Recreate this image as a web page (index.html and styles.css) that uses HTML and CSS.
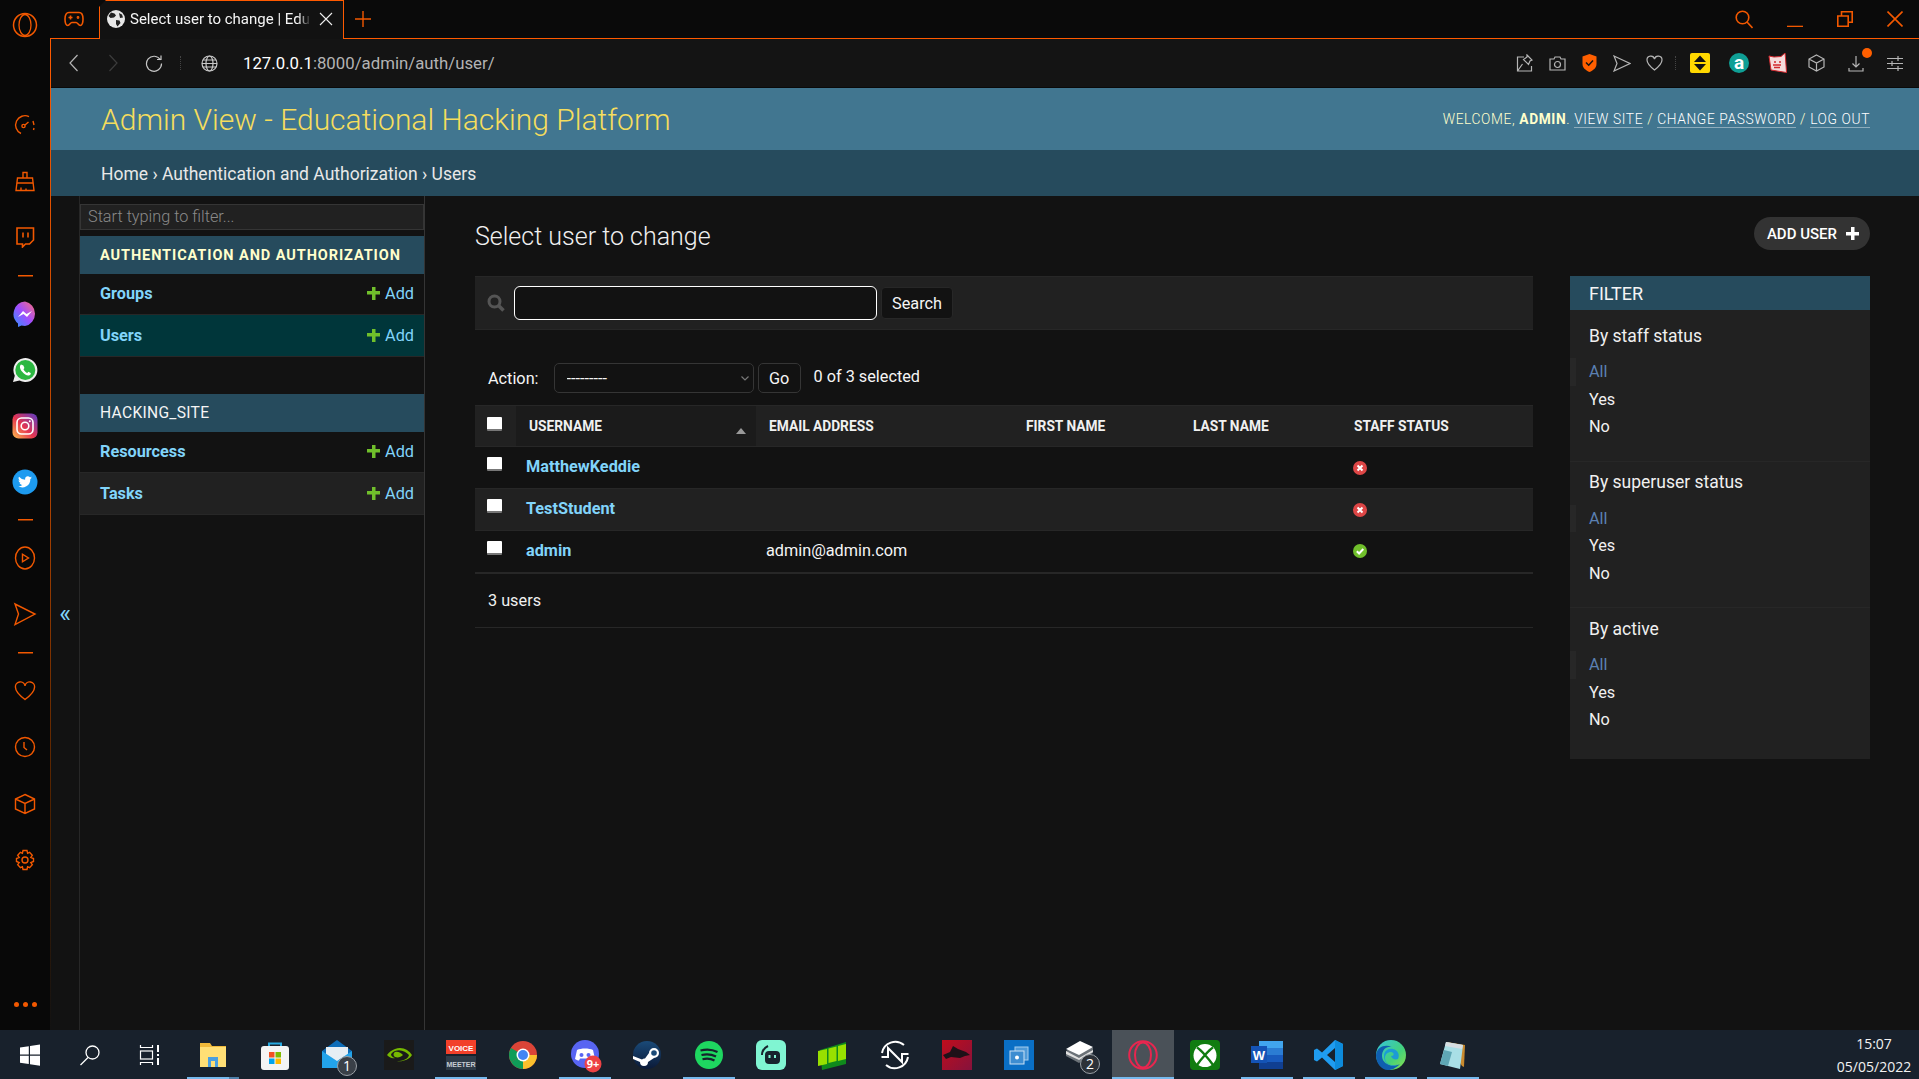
FILE: index.html
```html
<!DOCTYPE html>
<html lang="en">

<head>
    <meta charset="UTF-8">
    <title>Select user to change | Educational Hacking Platform</title>
    <link rel="stylesheet" href="styles.css">
</head>

<body>
    <div class="screen">
        <!-- opera side rail -->
        <aside class="rail">
            <div class="rail-logo"><svg class="ic" width="26" height="26" viewBox="0 0 26 26"><circle cx="13" cy="13" r="11.5" stroke-width="1.5"/><ellipse cx="13" cy="13" rx="6" ry="10.5" stroke-width="1.3"/></svg></div>
            <div class="rail-slot rail-first"><svg class="ic" width="22" height="22" viewBox="0 0 22 22"><path d="M7 19.500A9.300 9.300 0 1 1 15 2.600"/><path d="M19 7l1 4M20 14l-.5 2"/><circle cx="9.500" cy="12" r="1.600"/><path d="M11 11l3.500-3"/></svg></div>
            <div class="rail-slot"><svg class="ic" width="22" height="22" viewBox="0 0 22 22"><path d="M9 8V2.500h4V8M3.500 8h15l1.500 12.500H2z"/><path d="M3 13h16M7 20.500v-3M12 20.500v-2"/></svg></div>
            <div class="rail-slot"><svg class="ic ic-thick" width="22" height="22" viewBox="0 0 22 22"><path d="M3 2h16.500v12l-4 4h-4l-3 3v-3H3z"/><path d="M9 6.500v5M14 6.500v5"/></svg></div>
            <div class="rail-dash"></div>
            <div class="rail-slot"><svg width="26" height="26" viewBox="0 0 26 26"><defs><linearGradient id="msg" x1="0" y1="1" x2="1" y2="0"><stop offset="0" stop-color="#2b93ff"/><stop offset=".5" stop-color="#a04dff"/><stop offset="1" stop-color="#ff7078"/></linearGradient></defs><path d="M13 .500a12.500 12.500 0 0 1 0 24.500c-1.300 0-2.500-.2-3.500-.5L6 26v-3.500A12.500 12.500 0 0 1 13 .500z" fill="url(#msg)"/><path d="M6 16l5-6 3.500 3 5.500-3-5 6-3.500-3z" fill="#fff"/></svg></div>
            <div class="rail-slot"><svg width="26" height="26" viewBox="0 0 26 26"><path d="M1 25l1.800-6.300A12 12 0 1 1 7.500 23.500z" fill="#eee"/><circle cx="13.300" cy="13" r="10" fill="#2bb741"/><path d="M9 7.500c-1.500 1.500-1.500 4 1 7s5 4.500 7 4c1.500-.4 2-2 1.700-2.600l-2.400-1.200-1 1.200c-1.500-.5-3-2-3.800-3.700l.9-1.200-1-2.500z" fill="#fff"/></svg></div>
            <div class="rail-slot"><svg width="26" height="26" viewBox="0 0 26 26"><defs><linearGradient id="ig" x1="0" y1="1" x2="1" y2="0"><stop offset="0" stop-color="#fdc04f"/><stop offset=".45" stop-color="#e7354f"/><stop offset="1" stop-color="#5a3dc8"/></linearGradient></defs><rect x="0.500" y="0.500" width="25" height="25" rx="6" fill="url(#ig)"/><rect x="5" y="5" width="16" height="16" rx="4.500" fill="none" stroke="#fff" stroke-width="1.600"/><circle cx="13" cy="13" r="3.800" fill="none" stroke="#fff" stroke-width="1.600"/><circle cx="17.800" cy="8.200" r="1" fill="#fff"/></svg></div>
            <div class="rail-slot"><svg width="26" height="26" viewBox="0 0 26 26"><circle cx="13" cy="13" r="12.500" fill="#1d9bf0"/><path d="M20 8.500c-.5.300-1 .4-1.600.5.600-.3 1-.9 1.200-1.500-.5.300-1.100.5-1.700.7a2.800 2.800 0 0 0-4.800 2.500A8 8 0 0 1 7 7.800a2.800 2.800 0 0 0 .9 3.700c-.5 0-.9-.1-1.300-.3 0 1.400 1 2.500 2.300 2.800-.4.100-.9.100-1.300 0 .4 1.100 1.400 1.900 2.700 1.900A5.700 5.700 0 0 1 6 17.100a8 8 0 0 0 12.300-7.200c.7-.3 1.200-.8 1.700-1.400z" fill="#fff"/></svg></div>
            <div class="rail-dash"></div>
            <div class="rail-slot"><svg class="ic" width="22" height="24" viewBox="0 0 22 24"><ellipse cx="11" cy="12" rx="9.500" ry="11"/><path d="M8.500 8.200v7.600l6-3.800z"/></svg></div>
            <div class="rail-slot"><svg class="ic" width="24" height="24" viewBox="0 0 24 24"><path d="M2 2l20 10L2 22.500l3.500-10.500z"/></svg></div>
            <div class="rail-dash"></div>
            <div class="rail-slot"><svg class="ic" width="22" height="20" viewBox="0 0 22 20"><path d="M11 18.500C5 14 1.500 10.500 1.500 6.500a4.800 4.800 0 0 1 9.500-1.500 4.800 4.800 0 0 1 9.500 1.500c0 4-3.500 7.500-9.500 12z"/></svg></div>
            <div class="rail-slot"><svg class="ic" width="22" height="22" viewBox="0 0 22 22"><circle cx="11" cy="11" r="9.500"/><path d="M10 6v5.500l3 2.500"/></svg></div>
            <div class="rail-slot rail-cube"><svg class="ic" width="22" height="22" viewBox="0 0 22 22"><path d="M11 1.500l9.500 4.500v10L11 20.500 1.500 16V6zM1.500 6L11 10.500 20.500 6M11 10.500v10"/></svg></div>
            <div class="rail-slot"><svg class="ic" width="22" height="22" viewBox="0 0 22 22"><circle cx="11" cy="11" r="3"/><path d="M9 1.500h4l.6 2.800 2-.9 2.700 3-1.500 2 2.700 1.100v3l-2.700 1.100 1.500 2-2.700 3-2-.9-.6 2.800H9l-.6-2.800-2 .9-2.700-3 1.500-2L2.500 12.500v-3l2.700-1.100-1.500-2 2.700-3 2 .9z"/></svg></div>
            <div class="rail-dots"><i></i><i></i><i></i></div>
        </aside>

        <div class="browser">
            <!-- tabs -->
            <div class="tabstrip">
                <div class="strip-game"><svg class="ic ic-thick" width="20" height="16" viewBox="0 0 20 16"><path d="M5 1.500h10c2.500 0 4 2.500 4 6.500 0 4-1 6.500-2.800 6.500-1.700 0-2.700-3-4-3H7.800c-1.300 0-2.300 3-4 3C2 14.500 1 12 1 8c0-4 1.500-6.500 4-6.500z"/><path d="M4.500 6.500h4M6.500 4.500v4"/><circle cx="14" cy="6.500" r=".6"/></svg></div>
                <div class="tab">
                    <svg width="18" height="18" viewBox="0 0 18 18"><circle cx="9" cy="9" r="9" fill="#e8e8e8"/><path d="M4 2.500l3.500 1 1.500 2-2 2-3.500.5-2-2zM9 10l3.500.5 1 2.500-3 3.500-1.500-2.500zM12 3l3 1.500 1 3-3 .5z" fill="#222"/></svg>
                    <span class="tab-title">Select user to change | Edu</span>
                    <svg class="tab-close" width="14" height="14" viewBox="0 0 14 14"><path d="M1 1l12 12M13 1L1 13" stroke="#eee" stroke-width="1.100"/></svg>
                </div>
                <div class="tab-new"><svg class="ic" width="16" height="16" viewBox="0 0 16 16"><path d="M8 0v16M0 8h16"/></svg></div>
                <div class="strip-right">
                    <svg class="ic ic-thick" width="18" height="19" viewBox="0 0 18 19"><circle cx="7.500" cy="7.500" r="6.300"/><path d="M12 12l5.500 6"/></svg>
                    <svg class="ic ic-thick win-btn" width="16" height="16" viewBox="0 0 16 16"><path d="M0 15.500h16"/></svg>
                    <svg class="ic ic-thick win-btn" width="16" height="16" viewBox="0 0 16 16"><path d="M.8 5h10.400v10.400H.8zM4.500 5V.8h10.700v10.500h-4"/></svg>
                    <svg class="ic ic-thick win-btn" width="16" height="16" viewBox="0 0 16 16"><path d="M.5.500l15 15M15.500.500l-15 15"/></svg>
                </div>
            </div>

            <!-- address bar -->
            <div class="toolbar">
                <svg class="tool tool-back" width="11" height="18" viewBox="0 0 11 18"><path d="M9.500 1L2 9l7.500 8"/></svg>
                <svg class="tool tool-fwd" width="11" height="18" viewBox="0 0 11 18"><path d="M1.500 1L9 9l-7.500 8"/></svg>
                <svg class="tool tool-reload" width="18" height="18" viewBox="0 0 18 18"><path d="M15.500 6A7.500 7.500 0 1 0 16.500 9.500M12 5.500h4V1.500"/></svg>
                <span class="dots-v"></span>
                <svg class="tool tool-globe" width="17" height="17" viewBox="0 0 17 17"><circle cx="8.500" cy="8.500" r="7.500"/><ellipse cx="8.500" cy="8.500" rx="3.500" ry="7.500"/><path d="M1 8.500h15M2 5h13M2 12h13"/></svg>
                <div class="url"><b>127.0.0.1</b>:8000/admin/auth/user/</div>
                <div class="tools-right">
                    <span class="slot"><svg class="tool" width="17" height="18" viewBox="0 0 17 18"><path d="M8 3H1.500v14h14v-5M1.500 17l5-7"/><path d="M11 1l5 5-2 1-1.500 3.500-5-5L11 3z"/></svg></span>
                    <span class="slot"><svg class="tool" width="17" height="15" viewBox="0 0 17 15"><path d="M1 3h4l1-2h5l1 2h4v11H1z"/><circle cx="8.500" cy="8.500" r="3"/></svg></span>
                    <span class="slot"><svg width="15" height="18" viewBox="0 0 15 18"><path d="M7.500 0l7 2.500V10c0 4-3.500 6.500-7 8-3.500-1.500-7-4-7-8V2.500z" fill="#ff5f00"/><path d="M4 8.500l2.700 2.700L11 6.500" fill="none" stroke="#141414" stroke-width="1.500"/></svg></span>
                    <span class="slot"><svg class="tool" width="18" height="17" viewBox="0 0 18 17"><path d="M1 1l16 7.500L1 16l3-7.500z"/></svg></span>
                    <span class="slot"><svg class="tool" width="17" height="16" viewBox="0 0 17 16"><path d="M8.500 15C4 11.500 1 8.500 1 5a3.800 3.800 0 0 1 7.500-1A3.800 3.800 0 0 1 16 5c0 3.500-3 6.500-7.500 10z"/></svg></span>
                    <span class="dots-v dots-right"></span>
                    <span class="ext"><svg width="20" height="20" viewBox="0 0 20 20"><rect width="20" height="20" rx="2" fill="#ffd800"/><path d="M10 2.500l6 6.500H4zM10 17.500L4 11h12z" fill="#111"/></svg></span>
                    <span class="ext"><svg class="ext-round" width="20" height="20" viewBox="0 0 20 20"><circle cx="10" cy="10" r="10" fill="#0f9f95"/><text x="10" y="15.500" class="ext-a">a</text></svg></span>
                    <span class="ext"><svg width="20" height="20" viewBox="0 0 20 20"><path d="M1 3l5 1 7-.5L17 0l.5 5 1 14.500L3 17z" fill="#f5dcdc" stroke="#d2282e"/><path d="M6 9h2M11 9h2M5 12h8M6 14.500h6" stroke="#d2282e" stroke-width="1.500"/></svg></span>
                    <span class="ext"><svg class="tool" width="17" height="18" viewBox="0 0 17 18"><path d="M8.500 1L16 5v8l-7.500 4L1 13V5zM1 5l7.500 4L16 5M8.500 9v8"/></svg></span>
                    <span class="ext ext-dl"><svg class="tool" width="16" height="17" viewBox="0 0 16 17"><path d="M8 1v11M4.500 8.500L8 12l3.500-3.500M1 13v3h14v-3"/></svg><i class="dl-badge"></i></span>
                    <span class="ext"><svg class="tool" width="16" height="15" viewBox="0 0 16 15"><path d="M0 2.500h16M0 7.500h16M0 12.500h16M11 0v5M5 5v5M11 10v5"/></svg></span>
                </div>
            </div>

            <!-- django admin page -->
            <div class="site">
                <header class="site-header">
                    <div class="branding">Admin View - Educational Hacking Platform</div>
                    <div class="user-tools">WELCOME, <strong>ADMIN</strong>. <a>VIEW SITE</a> / <a>CHANGE PASSWORD</a> / <a>LOG OUT</a></div>
                </header>
                <div class="breadcrumbs">Home › Authentication and Authorization › Users</div>

                <div class="content">
                    <div class="nav-toggle">«</div>
                    <nav class="sidebar">
                        <input class="nav-filter" placeholder="Start typing to filter...">
                        <div class="app-caption app-current">AUTHENTICATION AND AUTHORIZATION</div>
                        <div class="app-row"><a>Groups</a><span class="add"><i class="plus"></i>Add</span></div>
                        <div class="app-row app-row-current"><a>Users</a><span class="add"><i class="plus"></i>Add</span></div>
                        <div class="app-caption app-second">HACKING_SITE</div>
                        <div class="app-row"><a>Resourcess</a><span class="add"><i class="plus"></i>Add</span></div>
                        <div class="app-row app-row-alt"><a>Tasks</a><span class="add"><i class="plus"></i>Add</span></div>
                    </nav>

                    <main class="main">
                        <div class="title-row">
                            <h1>Select user to change</h1>
                            <a class="add-user">ADD USER<i class="plus plus-white"></i></a>
                        </div>
                        <div class="columns">
                            <section class="changelist">
                                <div class="search-bar">
                                    <svg width="18" height="18" viewBox="0 0 18 18"><circle cx="7.500" cy="7.500" r="5.500" fill="none" stroke="#555" stroke-width="3"/><path d="M11.500 11.500l5 5" stroke="#555" stroke-width="3.500"/></svg>
                                    <input class="search-input" type="text">
                                    <button class="btn btn-search">Search</button>
                                </div>
                                <div class="actions">
                                    <span>Action:</span>
                                    <div class="select-wrap">
                                        <select class="action-select"><option>---------</option></select>
                                        <svg class="select-arrow" width="8" height="5" viewBox="0 0 8 5"><path d="M.5.500L4 4 7.500.500" fill="none" stroke="#777" stroke-width="1.200"/></svg>
                                    </div>
                                    <button class="btn btn-go">Go</button>
                                    <span class="counter">0 of 3 selected</span>
                                </div>
                                <table class="results">
                                    <thead>
                                        <tr>
                                            <th class="col-check"><input type="checkbox" class="check check-head"></th>
                                            <th class="col-user">USERNAME<i class="sort-up"></i></th>
                                            <th class="col-email">EMAIL ADDRESS</th>
                                            <th class="col-first">FIRST NAME</th>
                                            <th class="col-last">LAST NAME</th>
                                            <th>STAFF STATUS</th>
                                        </tr>
                                    </thead>
                                    <tbody>
                                        <tr>
                                            <td class="col-check"><input type="checkbox" class="check"></td>
                                            <td class="cell-user"><a>MatthewKeddie</a></td>
                                            <td></td><td></td><td></td>
                                            <td class="cell-status"><svg width="14" height="14" viewBox="0 0 14 14"><circle cx="7" cy="7" r="7" fill="#dd4646"/><path d="M4.500 4.500l5 5M9.500 4.500l-5 5" stroke="#fff" stroke-width="2"/></svg></td>
                                        </tr>
                                        <tr class="row-alt">
                                            <td class="col-check"><input type="checkbox" class="check"></td>
                                            <td class="cell-user"><a>TestStudent</a></td>
                                            <td></td><td></td><td></td>
                                            <td class="cell-status"><svg width="14" height="14" viewBox="0 0 14 14"><circle cx="7" cy="7" r="7" fill="#dd4646"/><path d="M4.500 4.500l5 5M9.500 4.500l-5 5" stroke="#fff" stroke-width="2"/></svg></td>
                                        </tr>
                                        <tr class="row-last">
                                            <td class="col-check"><input type="checkbox" class="check"></td>
                                            <td class="cell-user"><a>admin</a></td>
                                            <td class="cell-email">admin@admin.com</td><td></td><td></td>
                                            <td class="cell-status"><svg width="14" height="14" viewBox="0 0 14 14"><circle cx="7" cy="7" r="7" fill="#70bf2b"/><path d="M3.800 7.200l2.300 2.300 4.200-4.500" fill="none" stroke="#fff" stroke-width="2"/></svg></td>
                                        </tr>
                                    </tbody>
                                </table>
                                <p class="paginator">3 users</p>
                            </section>

                            <aside class="filter">
                                <h2>FILTER</h2>
                                <div class="filter-group">
                                    <h3>By staff status</h3>
                                    <ul><li class="selected">All</li><li>Yes</li><li>No</li></ul>
                                </div>
                                <div class="filter-group">
                                    <h3>By superuser status</h3>
                                    <ul><li class="selected">All</li><li>Yes</li><li>No</li></ul>
                                </div>
                                <div class="filter-group">
                                    <h3>By active</h3>
                                    <ul><li class="selected">All</li><li>Yes</li><li>No</li></ul>
                                </div>
                            </aside>
                        </div>
                    </main>
                </div>
            </div>
        </div>
    </div>

    <!-- windows taskbar -->
    <footer class="taskbar">
        <span class="task task-sys"><svg width="22" height="22" viewBox="0 0 22 22"><path d="M1 3.500l8.800-1.300v8.300H1zM11 2L21 .5v10H11zM1 11.800h8.800v8.300L1 18.800zM11 11.800h10v10L11 20.300z" fill="#fff"/></svg></span>
        <span class="task task-sys"><svg width="22" height="22" viewBox="0 0 22 22"><circle cx="13.500" cy="8.500" r="6.500" fill="none" stroke="#fff" stroke-width="1.300"/><path d="M9 13.500L1.500 21" stroke="#fff" stroke-width="1.300"/></svg></span>
        <span class="task task-sys"><svg width="22" height="22" viewBox="0 0 22 22" fill="none" stroke="#fff" stroke-width="1.200"><path d="M1.500 1v2.500h12V1M1.500 21v-2.500h12V21"/><rect x="1.500" y="7" width="12" height="8"/><path d="M19 1v7M19 14v7" stroke-width="2"/><path d="M19 10v2" stroke-width="2"/></svg></span>
        <span class="task task-files is-open is-split"><svg width="28" height="26" viewBox="0 0 28 26"><path d="M1 1h10l2 3h14v21H1z" fill="#f0b93a"/><path d="M1 5h26v20H1z" fill="#ffdf75"/><path d="M9 25V15h10v10h-3v-6h-4v6z" fill="#4a9fe0"/></svg></span>
        <span class="task"><svg width="30" height="30" viewBox="0 0 30 30"><path d="M9 8V3.500h12V8" fill="none" stroke="#26a9e0" stroke-width="2"/><rect x="1" y="6" width="28" height="24" rx="3" fill="#f4f4f4"/><rect x="9" y="12" width="5.500" height="5.500" fill="#f25022"/><rect x="15.500" y="12" width="5.500" height="5.500" fill="#7fba00"/><rect x="9" y="18.500" width="5.500" height="5.500" fill="#00a4ef"/><rect x="15.500" y="18.500" width="5.500" height="5.500" fill="#ffb900"/></svg></span>
        <span class="task"><svg width="32" height="32" viewBox="0 0 32 32"><path d="M1 12L16 1l15 11v16H1z" fill="#0e6db8"/><path d="M5 8h22v12l-11 6-11-6z" fill="#e6eef4"/><path d="M1 12l15 10 15-10v17H1z" fill="#22a3ea"/><circle cx="26" cy="27" r="9.500" fill="#3a4048" stroke="#9aa0a6"/><text x="26" y="32" class="badge-num">1</text></svg></span>
        <span class="task"><svg width="30" height="30" viewBox="0 0 30 30"><rect width="30" height="30" fill="#1a1a1a"/><path d="M11 9c7-3 14 1 17 6-3 5-10 7-15 6 6 0 11-2 12-6-3-3-8-6-14-4zM3 15c2-3 5-5 8-6v2c-2 1-4 2-4 4 1 2 3 3 4 3-3 1-6-1-8-3z" fill="#76b900"/><path d="M11 12c3-1 6 1 8 3-2 2-5 3-8 2-2-1-2-4 0-5z" fill="#76b900"/></svg></span>
        <span class="task is-open"><svg width="30" height="30" viewBox="0 0 30 30"><rect width="30" height="14" fill="#f2402a"/><rect y="16" width="30" height="14" fill="#2e3b48"/><text x="15" y="11" class="vm-text">VOICE</text><text x="15" y="26.500" class="vm-text vm-low">MEETER</text></svg></span>
        <span class="task"><svg width="28" height="28" viewBox="0 0 28 28"><circle cx="14" cy="14" r="14" fill="#db4437"/><path d="M14 14L2 21A14 14 0 0 0 14 28L21 14z" fill="#0f9d58"/><path d="M14 14h14a14 14 0 0 1-14 14z" fill="#fbc02d"/><path d="M14 14L2 7A14 14 0 0 0 2 21z" fill="#0f9d58"/><circle cx="14" cy="14" r="6.500" fill="#fff"/><circle cx="14" cy="14" r="5" fill="#4285f4"/></svg></span>
        <span class="task is-open"><svg width="32" height="32" viewBox="0 0 32 32"><circle cx="16" cy="15" r="14" fill="#5865f2"/><path d="M8 11c4-2 12-2 16 0l2 9c-2 1-3 1.500-4 1.500l-1-2H11l-1 2c-1 0-2-.5-4-1.500z" fill="#fff"/><circle cx="12.500" cy="16" r="2" fill="#5865f2"/><circle cx="19.500" cy="16" r="2" fill="#5865f2"/><circle cx="24" cy="25" r="8.500" fill="#ed4245"/><text x="24" y="29" class="badge-small">9+</text></svg></span>
        <span class="task"><svg width="28" height="28" viewBox="0 0 28 28"><defs><linearGradient id="st" x1="0" y1="0" x2="0" y2="1"><stop offset="0" stop-color="#1a4a78"/><stop offset="1" stop-color="#0b1a38"/></linearGradient></defs><circle cx="14" cy="14" r="14" fill="url(#st)"/><path d="M0 15l9 3.500a4 4 0 0 1 3-1l4-5.500a5 5 0 1 1 5 5l-6 4a4 4 0 0 1-8 0L0 18z" fill="#fff"/><circle cx="21" cy="12" r="2.800" fill="#1a4a78"/></svg></span>
        <span class="task is-open"><svg width="28" height="28" viewBox="0 0 28 28"><circle cx="14" cy="14" r="14" fill="#1ed760"/><path d="M5.500 9.500c6-1.500 12-1 17 1.500M6.500 14c5-1.200 10-.8 14.500 1.500M7.500 18.300c4-1 8.500-.6 12 1.200" fill="none" stroke="#16222c" stroke-width="2.200"/></svg></span>
        <span class="task"><svg width="30" height="30" viewBox="0 0 30 30"><rect width="30" height="30" rx="6" fill="#80f5d2"/><rect x="9" y="11" width="15" height="13" rx="4" fill="#17242d"/><path d="M13.500 15v3M19 15v3" stroke="#80f5d2" stroke-width="2"/><path d="M6 15c0-4 2-7 6-9" fill="none" stroke="#17242d" stroke-width="2"/></svg></span>
        <span class="task"><svg width="30" height="30" viewBox="0 0 30 30"><path d="M2 10l26-8v22L4 30z" fill="#0f8a1c"/><path d="M0 11l9-2v15l-9 2zM10.500 8.500l8-2V21l-8 2zM20 6l8-2v15l-8 2z" fill="#98e000"/></svg></span>
        <span class="task"><svg width="30" height="30" viewBox="0 0 30 30" fill="none" stroke="#fff" stroke-width="2"><path d="M2 13A13.500 13.500 0 0 1 24 5"/><path d="M28 17A13.500 13.500 0 0 1 6 25"/><path d="M1.500 17H8V8l14 14v-8h6.500"/></svg></span>
        <span class="task"><svg width="30" height="30" viewBox="0 0 30 30"><defs><linearGradient id="msi" x1="0" y1="0" x2="1" y2="1"><stop offset="0" stop-color="#c00d1c"/><stop offset="1" stop-color="#85123c"/></linearGradient></defs><rect width="30" height="30" fill="url(#msi)"/><path d="M1 15l7-3 3-6 5 3 8 3 4 3-5 1-5 2-9-1-5 2z" fill="#1e1118"/></svg></span>
        <span class="task"><svg width="30" height="30" viewBox="0 0 30 30"><rect width="30" height="30" fill="#0a6fc5"/><rect x="11" y="7" width="13" height="13" fill="#4f9ad8" stroke="#a6cdee"/><rect x="6" y="11" width="14" height="13" fill="#3d8dd1" stroke="#c9e0f4"/><circle cx="13" cy="17.500" r="2" fill="#fff"/></svg></span>
        <span class="task"><svg width="32" height="32" viewBox="0 0 32 32"><path d="M1 12L15 3l13 6v5L14 24 1 17z" fill="#6b7278"/><path d="M1 10l14-8 13 6-14 8z" fill="#fff"/><path d="M1 12l13 7 14-8v2L14 21 1 15z" fill="#e0e0e0"/><circle cx="25" cy="25" r="9.500" fill="#2c3138" stroke="#9aa0a6"/><text x="25" y="30" class="badge-num">2</text></svg></span>
        <span class="task task-active"><svg width="30" height="30" viewBox="0 0 30 30" fill="none" stroke="#e8264f" stroke-width="2"><circle cx="15" cy="15" r="13.800"/><ellipse cx="15" cy="15" rx="8" ry="12.500"/></svg></span>
        <span class="task"><svg width="30" height="30" viewBox="0 0 30 30"><rect width="30" height="30" rx="4" fill="#107c10"/><circle cx="15" cy="15.500" r="11.500" fill="#fff"/><path d="M7 7.500C11 10 19 19 23 25M23 7.500C19 10 11 19 7 25" fill="none" stroke="#107c10" stroke-width="2.400"/></svg></span>
        <span class="task is-open"><svg width="32" height="32" viewBox="0 0 32 32"><path d="M8 2h24v28H8z" fill="#2b7cd3"/><path d="M8 16h24v7H8z" fill="#185abd"/><path d="M8 23h24v7H8z" fill="#103f91"/><path d="M8 9h24v7H8z" fill="#2b7cd3"/><path d="M8 2h24v7H8z" fill="#41a5ee"/><rect y="7" width="16" height="17" fill="#1453b5"/><text x="8" y="20.500" class="word-w">W</text></svg></span>
        <span class="task is-open"><svg width="30" height="30" viewBox="0 0 30 30"><path d="M21 0l8 4v22l-8 4L8 17.500 3 21.500 0 20V10l3-1.500 5 4zM21 8l-8 7 8 7z" fill="#1f9cf0"/><path d="M21 0l8 4v22l-8 4z" fill="#0d8bdc"/></svg></span>
        <span class="task is-open"><svg width="30" height="30" viewBox="0 0 30 30"><defs><linearGradient id="ed" x1="0" y1="0" x2="1" y2="1"><stop offset="0" stop-color="#36c4dc"/><stop offset=".6" stop-color="#44d17a"/><stop offset="1" stop-color="#8ee049"/></linearGradient></defs><circle cx="15" cy="15" r="15" fill="url(#ed)"/><path d="M0 15C1 6 10 4 16 7c-6-1-10 3-10 9 0 8 10 12 18 8-5 5-9 6-12 6C5 30 0 23 0 15z" fill="#0f5fb0"/><path d="M8 16c0-5 4-8 9-7 5 1 7 6 5 10-3 1-6 0-7-3 4 0 3-4 0-4-3 0-6 2-6 6 0 6 7 9 13 6-5 4-14 1-14-8z" fill="#1c9ad6"/></svg></span>
        <span class="task is-open"><svg width="28" height="30" viewBox="0 0 28 30"><path d="M8 2l18 3-1 22-2-1z" fill="#c98a2e"/><path d="M7 2l17 3-3 24L1 24z" fill="#a9dfe6"/><path d="M7 2l17 3-1 4L6 6z" fill="#d7dee2"/><path d="M1 24l4-14 8 2-4 14z" fill="#5fa7b5"/></svg></span>
        <div class="clock"><div>15:07</div><div>05/05/2022</div></div>
    </footer>
</body>

</html>
```

FILE: styles.css
```css
* {
    box-sizing: border-box;
}

body {
    margin: 0;
    height: 1079px;
    overflow: hidden;
    background-color: #121212;
    color: #f5f5f5;
    font-family: Roboto, "Liberation Sans", sans-serif;
    font-size: 16.25px;
}

svg {
    display: block;
    flex: none;
}

.screen {
    display: flex;
    height: 1030px;
}

.ic {
    fill: none;
    stroke: #f25800;
    stroke-width: 1.4;
}

.ic-thick {
    stroke-width: 1.6;
}

/* side rail */
.rail {
    width: 51px;
    flex: none;
    display: flex;
    flex-direction: column;
    align-items: center;
    background-color: #080808;
    border-right: 1px solid;
    border-image: linear-gradient(transparent 38px, #ff5a00 38px, #a84000 50%, #4a2000 80%, #121212 100%) 1;
}

.rail-logo {
    height: 50px;
    display: flex;
    align-items: center;
    justify-content: center;
    flex: none;
}

.rail-slot {
    height: 56px;
    flex: none;
    display: flex;
    align-items: center;
    justify-content: center;
}

.rail-first {
    margin-top: 47px;
}

.rail-cube {
    margin-top: 1px;
}

.rail-dash {
    width: 15px;
    height: 20.5px;
    flex: none;
    background: linear-gradient(#f25800, #f25800) center / 15px 1.5px no-repeat;
}

.rail-dots {
    margin-top: auto;
    margin-bottom: 23px;
    display: flex;
    gap: 4px;
}

.rail-dots i {
    width: 5px;
    height: 5px;
    border-radius: 50%;
    background-color: #f25800;
}

/* browser chrome */
.browser {
    flex: 1;
    display: flex;
    flex-direction: column;
    min-width: 0;
}

.tabstrip {
    height: 39px;
    flex: none;
    display: flex;
    align-items: flex-start;
    background-color: #0a0a0a;
    border-bottom: 1px solid #ff5a00;
    margin-left: -1px;
}

.strip-game {
    width: 49px;
    height: 38px;
    display: flex;
    align-items: center;
    padding-left: 14px;
}

.tab {
    width: 245px;
    height: 39px;
    display: flex;
    align-items: center;
    padding: 0 10px 2px 7px;
    background-color: #121212;
    border: 1px solid #ff5a00;
    border-bottom: 0;
    font-size: 15px;
    color: #f5f5f5;
    clip-path: polygon(7px 0, 100% 0, 100% 100%, 0 100%, 0 7px);
}

.tab-title {
    margin-left: 5px;
    white-space: nowrap;
    -webkit-mask-image: linear-gradient(to right, #000 168px, transparent 181px);
    mask-image: linear-gradient(to right, #000 168px, transparent 181px);
}

.tab-close {
    margin-left: auto;
}

.tab-new {
    height: 38px;
    display: flex;
    align-items: center;
    padding-left: 11px;
}

.strip-right {
    margin-left: auto;
    height: 38px;
    display: flex;
    align-items: center;
    padding-right: 16px;
}

.win-btn {
    margin-left: 34px;
}

.toolbar {
    height: 49px;
    flex: none;
    display: flex;
    align-items: center;
    padding-left: 17px;
    background-color: #141414;
    border-bottom: 1px solid #0a0a0a;
}

.tool {
    fill: none;
    stroke: #b5b5b5;
    stroke-width: 1.2;
}

.tool-fwd {
    margin-left: 29px;
    stroke: #3c3c3c;
}

.tool-reload {
    margin-left: 26px;
    stroke: #c8c8c8;
}

.tool-globe {
    margin-left: 20px;
    stroke: #c8c8c8;
}

.dots-v {
    width: 1px;
    height: 14px;
    margin-left: 17px;
    border-left: 1px dotted #444;
}

.url {
    margin-left: 25px;
    font-size: 16.8px;
    color: #b3b3b3;
}

.url b {
    font-weight: 400;
    color: #fff;
}

.tools-right {
    margin-left: auto;
    padding-right: 5px;
    display: flex;
    align-items: center;
}

.slot {
    width: 32.5px;
    display: flex;
    justify-content: center;
}

.dots-right {
    margin: 0 4px;
}

.ext {
    position: relative;
    width: 39px;
    display: flex;
    justify-content: center;
}

.ext-round {
    overflow: visible;
}

.ext-a {
    font-family: Roboto, sans-serif;
    font-weight: 700;
    font-size: 19px;
    fill: #fff;
    text-anchor: middle;
}

.dl-badge {
    position: absolute;
    top: -7px;
    right: 3px;
    width: 10px;
    height: 10px;
    border-radius: 50%;
    background-color: #ff5f00;
}

/* site header */
.site {
    flex: 1;
    display: flex;
    flex-direction: column;
    min-height: 0;
}

.site-header {
    height: 62px;
    flex: none;
    display: flex;
    align-items: center;
    justify-content: space-between;
    padding: 0 49px 0 50px;
    background-color: #417690;
    color: #ffc;
}

.branding {
    font-size: 30px;
    font-weight: 300;
    color: #f5dd5d;
}

.user-tools {
    font-size: 13.75px;
    font-weight: 300;
    letter-spacing: 0.625px;
}

.user-tools strong {
    font-weight: 700;
}

.user-tools a {
    color: #fff;
    border-bottom: 1px solid rgba(255, 255, 255, 0.4);
}

.breadcrumbs {
    height: 46px;
    flex: none;
    display: flex;
    align-items: center;
    padding: 2px 50px 0;
    background-color: #264b5d;
    color: #e8e8e8;
    font-size: 17.5px;
    font-weight: 400;
}

.content {
    flex: 1;
    display: flex;
    min-height: 0;
}

.nav-toggle {
    width: 29px;
    flex: none;
    display: flex;
    align-items: center;
    justify-content: center;
    color: #81d4fa;
    font-size: 25px;
    line-height: 1;
    border-right: 1px solid #272727;
}

/* sidebar */
.sidebar {
    width: 345px;
    flex: none;
    padding-top: 8px;
    border-right: 1px solid #353535;
}

.nav-filter {
    display: block;
    width: 100%;
    height: 26px;
    margin-bottom: 6px;
    padding: 0 7px 1px;
    background-color: #212121;
    border: 1px solid #353535;
    color: #fff;
    font: 16.25px Roboto, sans-serif;
    font-weight: 300;
}

.nav-filter::placeholder {
    color: #8a8a8a;
}

.app-caption {
    height: 38px;
    display: flex;
    align-items: center;
    padding-left: 20px;
    background-color: #264b5d;
    color: #f5f5f5;
    font-size: 15.6px;
    letter-spacing: 0.3px;
}

.app-current {
    font-weight: 700;
    color: #ffc;
    font-size: 14.5px;
    letter-spacing: 0.92px;
}

.app-second {
    margin-top: 37px;
}

.app-row {
    height: 41px;
    display: flex;
    align-items: center;
    justify-content: space-between;
    padding: 0 10px 2px 20px;
    border-bottom: 1px solid #272727;
}

.app-row + .app-row {
    height: 42px;
    padding-bottom: 1px;
}

.app-row a {
    color: #81d4fa;
    font-weight: 700;
}

.app-row-current {
    background-color: #00363a;
}

.app-row-alt {
    background-color: #212121;
}

.add {
    display: flex;
    align-items: center;
    color: #81d4fa;
    font-weight: 400;
}

.plus {
    display: inline-block;
    width: 13px;
    height: 13px;
    margin-right: 5px;
    background:
        linear-gradient(#70bf2b, #70bf2b) center / 13px 3.5px no-repeat,
        linear-gradient(#70bf2b, #70bf2b) center / 3.5px 13px no-repeat;
}

.plus-white {
    margin: 0 0 0 9px;
    background:
        linear-gradient(#fff, #fff) center / 13px 3.5px no-repeat,
        linear-gradient(#fff, #fff) center / 3.5px 13px no-repeat;
}

/* main column */
.main {
    flex: 1;
    min-width: 0;
    padding: 0 49px 0 50px;
}

.title-row {
    height: 80px;
    display: flex;
    justify-content: space-between;
}

.title-row h1 {
    margin: 26px 0 0;
    font-size: 25px;
    line-height: 30px;
    font-weight: 300;
    color: #f0f0f0;
}

.add-user {
    height: 33px;
    margin-top: 21px;
    display: flex;
    align-items: center;
    padding: 0 11px 0 13px;
    border-radius: 17px;
    background-color: #333;
    color: #fff;
    font-size: 15px;
    font-weight: 500;
}

.columns {
    display: flex;
    justify-content: space-between;
    align-items: flex-start;
}

.changelist {
    width: 1058px;
}

.search-bar {
    height: 54px;
    display: flex;
    align-items: center;
    padding-left: 12px;
    background-color: #212121;
    border-top: 1px solid #272727;
    border-bottom: 1px solid #272727;
}

.search-input {
    width: 363px;
    height: 34px;
    margin-left: 9px;
    background-color: #121212;
    border: 1px solid #fff;
    border-radius: 6px;
}

.btn {
    height: 32px;
    padding: 0;
    background-color: #121212;
    border: 1px solid #272727;
    border-radius: 4px;
    color: #f5f5f5;
    font: 16.25px Roboto, sans-serif;
}

.btn-search {
    width: 72px;
    margin-left: 4px;
}

.actions {
    height: 75px;
    display: flex;
    align-items: center;
    padding-left: 13px;
    padding-top: 21px;
}

.select-wrap {
    position: relative;
    margin-left: 15px;
}

.action-select {
    display: block;
    appearance: none;
    width: 200px;
    height: 30px;
    padding-left: 12px;
    background-color: #121212;
    border: 1px solid #353535;
    border-radius: 5px;
    color: #f5f5f5;
    font: 16.25px Roboto, sans-serif;
}

.select-arrow {
    position: absolute;
    right: 5px;
    top: 13px;
}

.btn-go {
    width: 43px;
    height: 30px;
    margin-left: 4px;
    border-color: #353535;
    border-radius: 5px;
}

.counter {
    margin-left: 13px;
    margin-top: -3px;
}

/* results table */
.results {
    width: 1058px;
    table-layout: fixed;
    border-collapse: collapse;
}

.results th {
    height: 41px;
    padding: 0 0 0 13px;
    text-align: left;
    background-color: #212121;
    border-top: 1px solid #272727;
    border-bottom: 1px solid #272727;
    color: #f0f0f0;
    font-size: 13.75px;
    font-weight: 700;
    position: relative;
}

.results td {
    height: 42px;
    padding: 0 0 0 10px;
    border-bottom: 1px solid #272727;
    line-height: 1;
}

.results .col-check {
    width: 41px;
    padding: 0 0 0 12px;
}

.col-user {
    width: 240px;
}

.col-email {
    width: 257px;
}

.col-first {
    width: 167px;
}

.col-last {
    width: 161px;
}

.results .col-user {
    background-color: #1b1b1b;
}

.check {
    appearance: none;
    display: block;
    width: 15px;
    height: 14px;
    margin: 0 0 7px;
    background-color: #fff;
    border-bottom: 2px solid #777;
    border-radius: 1px;
}

.check-head {
    margin-bottom: 5px;
}

.cell-user a {
    color: #81d4fa;
    font-weight: 700;
}

.results .cell-email {
    padding-left: 10px;
}

.results .cell-status {
    padding-left: 12px;
}

.row-alt td {
    background-color: #212121;
}

.row-last td {
    border-bottom-width: 2px;
}

.sort-up {
    position: absolute;
    right: 10px;
    top: 22px;
    width: 0;
    height: 0;
    border-left: 5.5px solid transparent;
    border-right: 5.5px solid transparent;
    border-bottom: 6px solid #999;
}

.paginator {
    height: 54px;
    margin: 0;
    padding: 17px 0 0 13px;
    border-bottom: 1px solid #272727;
    color: #f0f0f0;
}

/* filter panel */
.filter {
    width: 300px;
    background-color: #212121;
    padding-bottom: 25px;
}

.filter h2 {
    height: 34px;
    margin: 0;
    padding-left: 19px;
    display: flex;
    align-items: center;
    background-color: #264b5d;
    color: #f5f5f5;
    font-size: 18px;
    font-weight: 400;
}

.filter-group {
    padding-bottom: 20px;
    border-bottom: 1px solid #272727;
}

.filter-group:last-child {
    border-bottom: 0;
    padding-bottom: 0;
}

.filter-group h3 {
    margin: 0;
    height: 48px;
    padding: 14px 0 0 19px;
    font-size: 17.5px;
    line-height: 24px;
    font-weight: 400;
    color: #f0f0f0;
}

.filter-group + .filter-group h3 {
    height: 43px;
    padding-top: 8px;
}

.filter-group:last-child h3 {
    padding-top: 9px;
}

.filter-group ul {
    list-style: none;
    margin: 0;
    padding: 0;
}

.filter-group li {
    height: 27.5px;
    padding-left: 19px;
    line-height: 27.5px;
    color: #f0f0f0;
}

.filter-group li.selected {
    border-left: 6px solid #272727;
    padding-left: 13px;
    color: #5b80b2;
}

/* taskbar */
.taskbar {
    height: 49px;
    display: flex;
    background-color: #18212c;
}

.task {
    position: relative;
    width: 62px;
    flex: none;
    display: flex;
    align-items: center;
    justify-content: center;
    padding-top: 1px;
}

.task-sys {
    width: 60px;
}

.task-files {
    margin-left: 2px;
}

.task svg {
    overflow: visible;
}

.is-open::after,
.task-active::after {
    content: "";
    position: absolute;
    left: 5px;
    right: 5px;
    bottom: 0;
    height: 2px;
    background-color: #76b9ed;
}

.is-split::after {
    background: linear-gradient(to right, #76b9ed 80%, #4e7fa8 80%);
}

.task-active {
    background-color: #4a5158;
}

.task-active::after {
    left: 0;
    right: 0;
}

.badge-num {
    font-family: "Open Sans", sans-serif;
    font-size: 14px;
    fill: #fff;
    text-anchor: middle;
}

.badge-small {
    font-family: "Open Sans", sans-serif;
    font-size: 11px;
    font-weight: 700;
    fill: #fff;
    text-anchor: middle;
}

.vm-text {
    font-family: "Liberation Sans", sans-serif;
    font-size: 8px;
    font-weight: 700;
    fill: #fff;
    text-anchor: middle;
}

.vm-low {
    font-size: 7px;
    fill: #c6ccd2;
}

.word-w {
    font-family: "Liberation Sans", sans-serif;
    font-size: 13px;
    font-weight: 700;
    fill: #fff;
    text-anchor: middle;
}

.clock {
    margin-left: auto;
    width: 83px;
    padding: 2px 7px 0 0;
    text-align: center;
    font-family: "Open Sans", sans-serif;
    font-size: 14px;
    line-height: 23px;
    color: #f2f2f2;
}
```
